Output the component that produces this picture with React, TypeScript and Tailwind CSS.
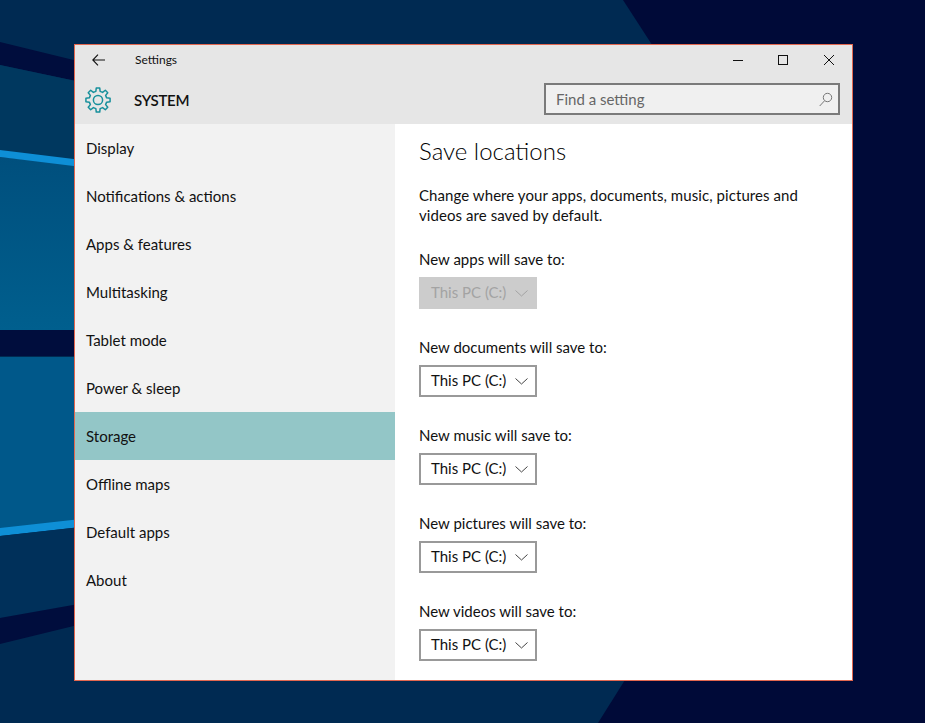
import React from "react";

const gearPath = (() => {
  const cx = 14, cy = 14, teeth = 8, rO = 12.2, rI = 8.9;
  const pts: string[] = [];
  for (let i = 0; i < teeth; i++) {
    const a = (i * 2 * Math.PI) / teeth - Math.PI / 2;
    const w = Math.PI / teeth;
    const list: [number, number][] = [
      [rI, a - w * 0.62],
      [rO, a - w * 0.36],
      [rO, a + w * 0.36],
      [rI, a + w * 0.62],
    ];
    for (const [r, t] of list) {
      pts.push(`${(cx + r * Math.cos(t)).toFixed(2)} ${(cy + r * Math.sin(t)).toFixed(2)}`);
    }
  }
  return "M" + pts.join("L") + "Z";
})();

const nav = ["Display", "Notifications & actions", "Apps & features", "Multitasking", "Tablet mode", "Power & sleep", "Storage", "Offline maps", "Default apps", "About"];
const saves = ["New apps will save to:", "New documents will save to:", "New music will save to:", "New pictures will save to:", "New videos will save to:"];

function Wallpaper() {
  return (
    <svg className="absolute inset-0" width="925" height="723" viewBox="0 0 925 723">
      <defs>
        <linearGradient id="mid" x1="0" y1="0" x2="0" y2="1">
          <stop offset="0" stopColor="#004f7d" />
          <stop offset="1" stopColor="#005f8e" />
        </linearGradient>
      </defs>
      <rect width="925" height="723" fill="#000a38" />
      <polygon points="0,0 623,0 680,88 650,640 598,723 0,723" fill="#002a52" />
      <polygon points="0,42 90,64 90,84 0,65" fill="#000d3d" />
      <polygon points="0,65 90,84 90,165 0,150" fill="#00385f" />
      <polygon points="0,157 90,166 90,330 0,330" fill="url(#mid)" />
      <polygon points="0,150 90,161 90,168 0,157" fill="#0e8fd6" />
      <rect x="0" y="330" width="90" height="26" fill="#000d3d" />
      <polygon points="0,357 90,357 90,519 0,530" fill="#00588a" />
      <polygon points="0,528 90,518 90,526 0,536" fill="#0e8fd6" />
      <polygon points="0,536 90,526 90,602 0,618" fill="#00305a" />
      <polygon points="0,618 90,602 90,622 0,644" fill="#000d3d" />
    </svg>
  );
}

function Chevron({ color }: { color: string }) {
  return (
    <svg width="13" height="7" viewBox="0 0 13 7" fill="none" stroke={color} strokeWidth="1">
      <path d="M0.5 0.5L6.5 6L12.5 0.5" />
    </svg>
  );
}

export default function App() {
  return (
    <div className="relative w-[925px] h-[723px] overflow-hidden font-['Lato','Noto_Sans',sans-serif] text-[15px] text-[#111111]">
      <Wallpaper />
      <div className="absolute left-[74px] top-[44px] flex flex-col w-[779px] h-[637px] border border-[#e2674f] bg-white">
        <div className="bg-[#e6e6e6] h-[79px] flex flex-col">
          <div className="flex items-center h-[28px] mt-px">
            <svg className="ml-[17px]" width="13" height="12" viewBox="0 0 13 12" fill="none" stroke="#111" strokeWidth="1.1">
              <path d="M13 6H0.8M6 0.6L0.8 6L6 11.4" />
            </svg>
            <span className="ml-[30px] text-[12px]">Settings</span>
            <svg className="ml-auto" width="10" height="10" viewBox="0 0 10 10" fill="none" stroke="#111" strokeWidth="1">
              <path d="M0 5.5H10" />
            </svg>
            <svg className="ml-[35px]" width="10" height="10" viewBox="0 0 10 10" fill="none" stroke="#111" strokeWidth="1">
              <rect x="0.5" y="0.5" width="9" height="9" />
            </svg>
            <svg className="ml-[36px] mr-[18px]" width="10" height="10" viewBox="0 0 10 10" fill="none" stroke="#111" strokeWidth="1">
              <path d="M0 0L10 10M10 0L0 10" />
            </svg>
          </div>
          <div className="flex items-center mt-[9px] h-[32px]">
            <svg className="ml-[9px] mt-[2px]" width="28" height="28" viewBox="0 0 28 28" fill="none" stroke="#17909c" strokeWidth="1.5" strokeLinejoin="round">
              <path d={gearPath} />
              <circle cx="14" cy="14" r="4.6" />
            </svg>
            <span className="ml-[22px] pt-[2px] font-semibold tracking-[-0.3px]">SYSTEM</span>
            <div className="ml-auto mr-[12px] w-[296px] h-[32px] border-2 border-[#7a7a7a] bg-[#f0f0f0] flex items-center pl-[10px] pr-[5px]">
              <span className="text-[#666666]">Find a setting</span>
              <svg className="ml-auto" width="14" height="15" viewBox="0 0 14 15" fill="none" stroke="#777" strokeWidth="1">
                <circle cx="8.5" cy="5.5" r="4.2" />
                <path d="M5.5 8.8L0.7 14" />
              </svg>
            </div>
          </div>
        </div>
        <div className="flex flex-1 min-h-0">
          <nav className="w-[320px] bg-[#f2f2f2]">
            {nav.map((n) => (
              <div key={n} className={`h-12 flex items-center pl-[11px] ${n === "Storage" ? "bg-[#93c6c7]" : ""}`}>
                {n}
              </div>
            ))}
          </nav>
          <main className="flex-1 pl-[24px] pr-[40px]">
            <h1 className="text-[24px] leading-[32px] mt-[11px] font-light text-black">Save locations</h1>
            <p className="leading-[20px] mt-[18px] tracking-[0.07px]">Change where your apps, documents, music, pictures and videos are saved by default.</p>
            <div className="flex flex-col gap-[28px] mt-[24px]">
              {saves.map((s, i) => (
                <div key={s}>
                  <div className="leading-[20px] mb-[8px]">{s}</div>
                  <div className={`w-[118px] h-[32px] flex items-center pl-[10px] pr-[7px] border-2 ${i === 0 ? "bg-[#cccccc] border-[#cccccc] text-[#a3a3a3]" : "bg-white border-[#999999]"}`}>
                    <span className="-mt-[2px]">This PC (C:)</span>
                    <span className="ml-auto flex"><Chevron color={i === 0 ? "#a3a3a3" : "#444"} /></span>
                  </div>
                </div>
              ))}
            </div>
          </main>
        </div>
      </div>
    </div>
  );
}
